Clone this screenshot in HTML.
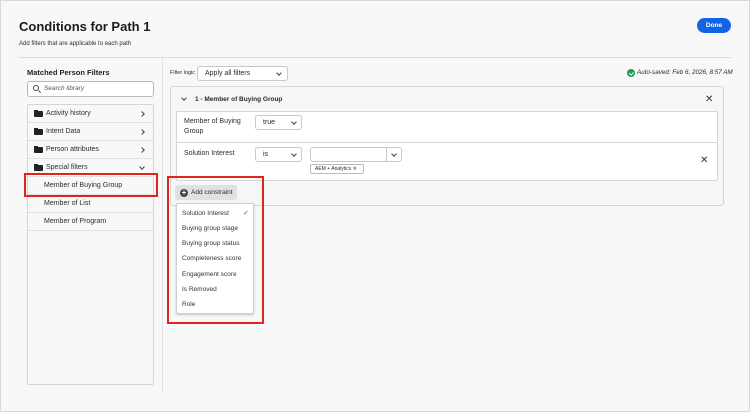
<!DOCTYPE html><html><head><style>
*{box-sizing:border-box;margin:0;padding:0}
body{width:750px;height:412px;background:#f8f8f8;font-family:"Liberation Sans",sans-serif;color:#2c2c2c;position:relative;overflow:hidden}
.frame{position:absolute;left:0;top:0;width:750px;height:412px;border:1px solid #d8d8d8;pointer-events:none}
.a{position:absolute}
.t{font-size:7px;white-space:nowrap}
.dd{position:absolute;background:#fff;border:1px solid #c9c9c9;border-radius:3px;font-size:7px;padding-left:7px;line-height:13px}
.chev{position:absolute;width:4px;height:4px;border-right:1.2px solid #444;border-bottom:1.2px solid #444;transform:rotate(45deg)}
.chr{position:absolute;width:4px;height:4px;border-right:1.2px solid #444;border-bottom:1.2px solid #444;transform:rotate(-45deg)}
.row{position:absolute;left:0;width:125px;height:18px;border-bottom:1px solid #e0e0e0;font-size:7px;line-height:18px}
.fold{position:absolute;left:6px;top:6px;width:9px;height:6px;background:#222;border-radius:1px}
.fold:before{content:"";position:absolute;left:0;top:-1.5px;width:4px;height:2px;background:#222}
.mi{position:absolute;left:5px;font-size:6.5px;color:#333}
.red{position:absolute;border:2px solid #e3241c}
</style></head><body>
<div class="frame"></div>
<div class="a" style="left:19px;top:19px;font-size:13px;font-weight:bold;color:#1a1a1a">Conditions for Path 1</div>
<div class="a t" style="left:19px;top:41px;font-size:6px">Add filters that are applicable to each path</div>
<div class="a" style="left:697px;top:18px;width:34px;height:15px;background:#1264e3;border-radius:8px;color:#fff;font-size:6.5px;font-weight:bold;text-align:center;line-height:15px">Done</div>
<div class="a" style="left:19px;top:57px;width:712px;height:1px;background:#dcdcdc"></div>
<div class="a" style="left:162px;top:58px;width:1px;height:335px;background:#e2e2e2"></div>

<div class="a" style="left:27px;top:68px;font-size:7.5px;font-weight:bold;color:#222">Matched Person Filters</div>
<div class="a" style="left:27px;top:81px;width:127px;height:16px;background:#fff;border:1px solid #b9b9b9;border-radius:3px">
<div class="a" style="left:5px;top:3px;width:6px;height:6px;border:1.2px solid #444;border-radius:50%"></div>
<div class="a" style="left:10px;top:9px;width:3px;height:1.2px;background:#444;transform:rotate(45deg)"></div>
<div class="a t" style="left:16px;top:3px;font-style:italic;font-size:6.5px;color:#555">Search library</div></div>
<div class="a" style="left:27px;top:104px;width:127px;height:281px;border:1px solid #d6d6d6;border-radius:2px;background:#f8f8f8">
<div class="row" style="top:0"><div class="fold"></div><span style="margin-left:18px">Activity history</span><div class="chr" style="left:112px;top:7px"></div></div>
<div class="row" style="top:18px"><div class="fold"></div><span style="margin-left:18px">Intent Data</span><div class="chr" style="left:112px;top:7px"></div></div>
<div class="row" style="top:36px"><div class="fold"></div><span style="margin-left:18px">Person attributes</span><div class="chr" style="left:112px;top:7px"></div></div>
<div class="row" style="top:54px"><div class="fold"></div><span style="margin-left:18px">Special filters</span><div class="chev" style="left:112px;top:6px"></div></div>
<div class="row" style="top:72px"><span style="margin-left:16px">Member of Buying Group</span></div>
<div class="row" style="top:90px"><span style="margin-left:16px">Member of List</span></div>
<div class="row" style="top:108px"><span style="margin-left:16px">Member of Program</span></div>
</div>
<div class="red" style="left:24px;top:173px;width:134px;height:24px"></div>

<div class="a t" style="left:170px;top:70px;font-size:5.5px">Filter logic</div>
<div class="dd" style="left:197px;top:66px;width:91px;height:15px">Apply all filters<div class="chev" style="left:79px;top:4px"></div></div>
<div class="a" style="left:627px;top:69px;width:8px;height:8px;border-radius:50%;background:#1f9e5a"></div>
<div class="a" style="left:629.5px;top:70.5px;width:2.5px;height:4px;border-right:1.2px solid #fff;border-bottom:1.2px solid #fff;transform:rotate(45deg)"></div>
<div class="a t" style="left:637px;top:69px;font-style:italic;font-size:6.3px">Auto-saved: Feb 6, 2026, 8:57 AM</div>

<div class="a" style="left:170px;top:86px;width:554px;height:120px;border:1px solid #d6d6d6;border-radius:3px;background:#f6f6f6"></div>
<div class="chev" style="left:182px;top:96px"></div>
<div class="a t" style="left:195px;top:96px;font-weight:bold;font-size:6.5px">1 - Member of Buying Group</div>
<div class="a" style="left:705px;top:94px;font-size:10px;color:#333">✕</div>
<div class="a" style="left:176px;top:111px;width:542px;height:70px;background:#fff;border:1px solid #d6d6d6;border-radius:2px"></div>
<div class="a" style="left:176px;top:142px;width:542px;height:1px;background:#d6d6d6"></div>
<div class="a" style="left:184px;top:117px;font-size:7px;line-height:10px">Member of Buying<br>Group</div>
<div class="dd" style="left:255px;top:115px;width:47px;height:15px">true<div class="chev" style="left:36px;top:4px"></div></div>
<div class="a t" style="left:184px;top:150px">Solution Interest</div>
<div class="dd" style="left:255px;top:147px;width:47px;height:15px">is<div class="chev" style="left:36px;top:4px"></div></div>
<div class="dd" style="left:310px;top:147px;width:92px;height:15px"><div class="a" style="left:75px;top:0;width:1px;height:13px;background:#c9c9c9"></div><div class="chev" style="left:81px;top:4px"></div></div>
<div class="a" style="left:310px;top:164px;width:54px;height:10px;border:1px solid #bbb;border-radius:2px;background:#fff;font-size:5px;line-height:8px;padding-left:4px">AEM + Analytics ✕</div>
<div class="a" style="left:700px;top:155px;font-size:10px;color:#333">✕</div>

<div class="a" style="left:175px;top:185px;width:62px;height:15px;background:#e1e1e1;border-radius:3px"></div>
<div class="a" style="left:180px;top:188.5px;width:8px;height:8px;border-radius:50%;background:#444;color:#fff;font-size:8px;line-height:8px;text-align:center;font-weight:bold">+</div>
<div class="a t" style="left:191px;top:189px;font-size:6.5px">Add constraint</div>

<div class="a" style="left:176px;top:203px;width:78px;height:111px;background:#fff;border:1px solid #d0d0d0;border-radius:2px;box-shadow:0 1px 2px rgba(0,0,0,.2)">
<div class="mi" style="top:6px">Solution Interest</div><div class="a" style="left:66px;top:5px;font-size:7px;color:#1264e3">✓</div>
<div class="mi" style="top:21px">Buying group stage</div>
<div class="mi" style="top:36px">Buying group status</div>
<div class="mi" style="top:51px">Completeness score</div>
<div class="mi" style="top:67px">Engagement score</div>
<div class="mi" style="top:82px">Is Removed</div>
<div class="mi" style="top:97px">Role</div>
</div>
<div class="red" style="left:167px;top:176px;width:97px;height:148px"></div>
</body></html>
